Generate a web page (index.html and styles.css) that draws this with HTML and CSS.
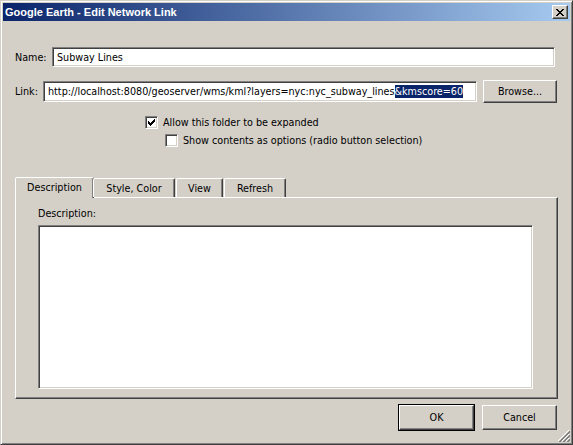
FILE: index.html
```html
<!DOCTYPE html>
<html>
<head>
<meta charset="utf-8">
<link rel="stylesheet" href="styles.css">
</head>
<body>
<div class="window">
  <div class="titlebar">
    <span class="title">Google Earth - Edit Network Link</span>
    <div class="close"><svg width="8" height="7" viewBox="0 0 8 7"><path d="M0 0h2v1h-2zM6 0h2v1h-2zM1 1h2v1h-2zM5 1h2v1h-2zM2 2h4v1h-4zM3 3h2v1h-2zM2 4h4v1h-4zM1 5h2v1h-2zM5 5h2v1h-2zM0 6h2v1h-2zM6 6h2v1h-2z" fill="#000"/></svg></div>
  </div>
  <div class="content">
    <div class="row name-row">
      <span class="label name-label">Name:</span>
      <div class="field name-field">Subway Lines</div>
    </div>
    <div class="row link-row">
      <span class="label link-label">Link:</span>
      <div class="field link-field">http://localhost:8080/geoserver/wms/kml?layers=nyc:nyc_subway_lines<span class="sel">&amp;kmscore=60</span></div>
      <div class="btn browse">Browse...</div>
    </div>
    <div class="check check-1">
      <span class="box"><svg width="7" height="7" viewBox="0 0 7 7"><path d="M0 2h1v3h-1zM1 3h1v3h-1zM2 4h1v3h-1zM3 3h1v3h-1zM4 2h1v3h-1zM5 1h1v3h-1zM6 0h1v3h-1z" fill="#000"/></svg></span>
      <span class="check-text">Allow this folder to be expanded</span>
    </div>
    <div class="check check-2">
      <span class="box"></span>
      <span class="check-text">Show contents as options (radio button selection)</span>
    </div>
    <div class="tabs">
      <div class="tab active t-desc">Description</div>
      <div class="tab t-style">Style, Color</div>
      <div class="tab t-view">View</div>
      <div class="tab t-refresh">Refresh</div>
    </div>
    <div class="panel">
      <div class="desc-label">Description:</div>
      <div class="textarea"></div>
    </div>
    <div class="footer">
      <div class="btn ok"><span>OK</span></div>
      <div class="btn cancel">Cancel</div>
    </div>
  </div>
  <svg class="grip" width="12" height="12" viewBox="0 0 12 12">
    <path d="M11 0L0 11M11 4L4 11M11 8L8 11" stroke="#fff" stroke-width="1" shape-rendering="crispEdges"/>
    <path d="M12 1L1 12M12 2L2 12M12 5L5 12M12 6L6 12M12 9L9 12M12 10L10 12" stroke="#808080" stroke-width="1" shape-rendering="crispEdges"/>
  </svg>
</div>
</body>
</html>
```

FILE: styles.css
```css
html, body {
  margin: 0;
  padding: 0;
  background: #d4d0c8;
}
.window {
  position: relative;
  width: 573px;
  height: 445px;
  box-sizing: border-box;
  background: #d4d0c8;
  border: 1px solid;
  border-color: #d4d0c8 #404040 #404040 #d4d0c8;
  box-shadow: inset 1px 1px #fff, inset -1px -1px #808080;
  padding: 2px;
  font-family: "DejaVu Sans Condensed", "DejaVu Sans", sans-serif;
  font-size: 10.7px;
  color: #000;
  overflow: hidden;
}
.titlebar {
  height: 18px;
  display: flex;
  align-items: center;
  justify-content: space-between;
  background: linear-gradient(to right, #0a246a, #a6caf0);
  padding-left: 2px;
}
.title {
  color: #fff;
  font-weight: bold;
  font-size: 11px;
  font-family: "Liberation Sans", Arial, sans-serif;
}
.close {
  width: 16px;
  height: 14px;
  box-sizing: border-box;
  margin-right: 2px;
  background: #d4d0c8;
  border: 1px solid;
  border-color: #fff #404040 #404040 #fff;
  box-shadow: inset -1px -1px #808080;
  display: flex;
  align-items: center;
  justify-content: center;
  padding-right: 1px;
}
.close svg { display: block; }
.content {
  padding: 26px 13px 0 12px;
}
.row {
  display: flex;
  align-items: center;
}
.label {
  line-height: 13px;
}
.field {
  box-sizing: border-box;
  height: 20px;
  background: #fff;
  border: 1px solid;
  border-color: #808080 #fff #fff #808080;
  box-shadow: inset 1px 1px #404040, inset -1px -1px #d4d0c8;
  padding: 3px 3px 0 4px;
  line-height: 14px;
  white-space: nowrap;
  overflow: hidden;
}
.name-label { width: 37px; }
.name-field { width: 503px; }
.link-row { margin-top: 13px; height: 23px; }
.link-label { width: 28px; }
.link-field { width: 434px; height: 21px; padding-top: 3px; }
.sel {
  background: #0a246a;
  color: #fff;
}
.btn {
  box-sizing: border-box;
  background: #d4d0c8;
  border: 1px solid;
  border-color: #fff #404040 #404040 #fff;
  box-shadow: inset -1px -1px #808080;
  display: flex;
  align-items: center;
  justify-content: center;
}
.browse {
  width: 74px;
  height: 23px;
  margin-left: 6px;
}
.check {
  display: flex;
  align-items: center;
  height: 13px;
}
.check-1 { margin-top: 13px; margin-left: 130px; }
.check-2 { margin-top: 5px; margin-left: 150px; }
.box {
  width: 13px;
  height: 13px;
  box-sizing: border-box;
  background: #fff;
  border: 1px solid;
  border-color: #808080 #fff #fff #808080;
  box-shadow: inset 1px 1px #404040, inset -1px -1px #d4d0c8;
  display: flex;
  align-items: center;
  justify-content: center;
  margin-right: 5px;
}
.box svg { display: block; }
.tabs {
  display: flex;
  align-items: flex-end;
  margin-top: 29px;
  height: 21px;
  position: relative;
  z-index: 1;
}
.tab {
  box-sizing: border-box;
  height: 19px;
  border: 1px solid;
  border-bottom: none;
  border-color: #fff #404040 transparent #fff;
  box-shadow: inset -1px 0 #808080;
  border-radius: 2px 2px 0 0;
  display: flex;
  align-items: center;
  justify-content: center;
  padding-top: 1px;
}
.tab.active {
  height: 21px;
  margin-bottom: -1px;
  background: #d4d0c8;
  padding-top: 0;
  padding-bottom: 2px;
}
.t-desc { width: 79px; }
.t-style { width: 82px; margin-left: -1px; }
.t-view { width: 47px; margin-left: 1px; }
.t-refresh { width: 62px; margin-left: 1px; }
.panel {
  box-sizing: border-box;
  width: 543px;
  height: 202px;
  border: 1px solid;
  border-color: #fff #404040 #404040 #fff;
  box-shadow: inset -1px -1px #808080;
  padding: 9px 0 0 22px;
}
.desc-label { line-height: 13px; }
.textarea {
  box-sizing: border-box;
  width: 495px;
  height: 164px;
  margin-top: 5px;
  background: #fff;
  border: 1px solid;
  border-color: #808080 #fff #fff #808080;
  box-shadow: inset 1px 1px #404040, inset -1px -1px #d4d0c8;
}
.footer {
  display: flex;
  justify-content: flex-end;
  align-items: center;
  margin-top: 5px;
}
.ok {
  width: 77px;
  height: 27px;
  border: 1px solid #000;
  box-shadow: none;
  padding: 0;
}
.ok span {
  box-sizing: border-box;
  width: 100%;
  height: 100%;
  border: 1px solid;
  border-color: #fff #404040 #404040 #fff;
  box-shadow: inset -1px -1px #808080;
  display: flex;
  align-items: center;
  justify-content: center;
}
.cancel {
  width: 75px;
  height: 25px;
  margin-left: 7px;
}
.grip {
  position: absolute;
  right: 2px;
  bottom: 2px;
  display: block;
}
```
